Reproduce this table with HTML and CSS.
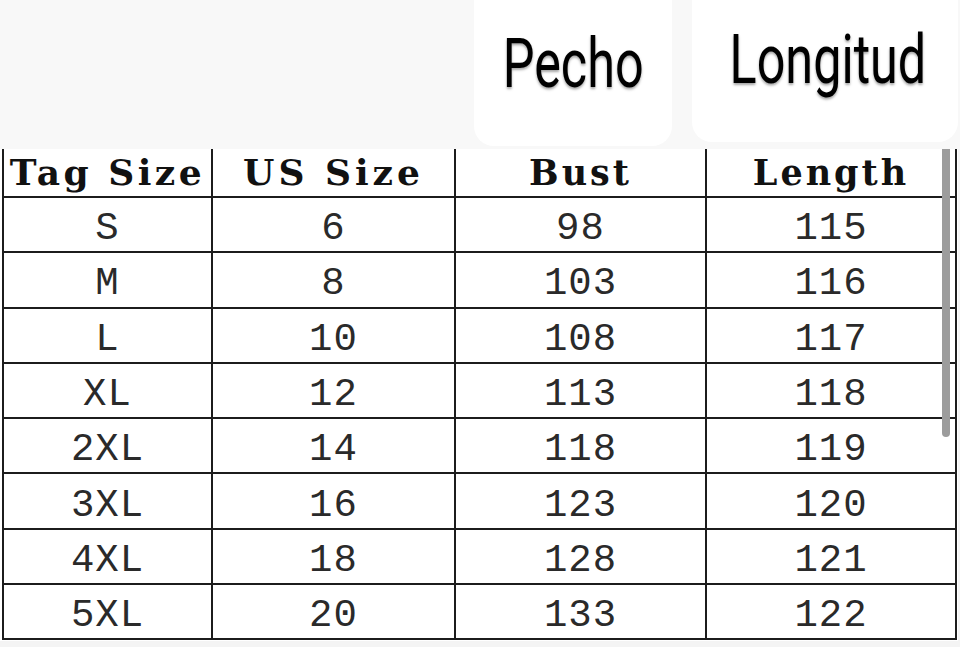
FILE: index.html
```html
<!DOCTYPE html>
<html lang="es">
<head>
<meta charset="utf-8">
<title>Size chart</title>
<link rel="stylesheet" href="styles.css">
</head>
<body>
<div class="topbar">
  <div class="tab tab-pecho"><span class="tab-label">Pecho</span></div>
  <div class="tab tab-longitud"><span class="tab-label">Longitud</span></div>
</div>
<div class="chart">
  <table class="sizes">
    <colgroup>
      <col class="c1"><col class="c2"><col class="c3"><col class="c4">
    </colgroup>
    <thead>
      <tr><th class="h-tag">Tag Size</th><th class="h-us">US Size</th><th>Bust</th><th>Length</th></tr>
    </thead>
    <tbody>
      <tr><td>S</td><td>6</td><td>98</td><td>115</td></tr>
      <tr><td>M</td><td>8</td><td>103</td><td>116</td></tr>
      <tr><td>L</td><td>10</td><td>108</td><td>117</td></tr>
      <tr><td>XL</td><td>12</td><td>113</td><td>118</td></tr>
      <tr><td>2XL</td><td>14</td><td>118</td><td>119</td></tr>
      <tr><td>3XL</td><td>16</td><td>123</td><td>120</td></tr>
      <tr><td>4XL</td><td>18</td><td>128</td><td>121</td></tr>
      <tr><td>5XL</td><td>20</td><td>133</td><td>122</td></tr>
    </tbody>
  </table>
  <div class="scrollbar"></div>
</div>
</body>
</html>
```

FILE: styles.css
```css
html, body {
  margin: 0;
  padding: 0;
}
body {
  background: #f4f4f4;
  width: 960px;
  height: 647px;
  overflow: hidden;
}
.topbar {
  height: 149px;
  display: flex;
  justify-content: flex-end;
  align-items: flex-start;
  gap: 20px;
  padding-right: 2px;
  box-sizing: border-box;
  background: #f8f8f8;
}
.tab {
  background: #ffffff;
  border-radius: 0 0 20px 20px;
  display: flex;
  justify-content: center;
  box-sizing: border-box;
}
.tab-pecho {
  width: 198px;
  height: 146px;
  padding-top: 26px;
}
.tab-longitud {
  width: 266px;
  height: 142px;
  padding-top: 22px;
  padding-left: 6px;
}
.tab-label {
  display: inline-block;
  font-family: "Roboto", "Noto Sans", sans-serif;
  font-size: 68px;
  line-height: 76px;
  color: #000;
  transform: scaleX(0.74);
  text-shadow: 0 2px 3px rgba(0, 0, 0, 0.35);
}
.chart {
  position: relative;
  background: #ffffff;
  width: 958px;
  height: 492px;
}
.sizes {
  border-collapse: collapse;
  margin-left: 2px;
  table-layout: fixed;
  width: 953px;
  font-family: "Liberation Mono", "DejaVu Sans Mono", monospace;
  color: #2a2a2a;
}
.c1 { width: 209px; }
.c2 { width: 243px; }
.c3 { width: 251px; }
.c4 { width: 250px; }
.sizes th, .sizes td {
  border: 2px solid #1c1c1c;
  text-align: center;
  padding: 0;
  white-space: nowrap;
}
.sizes thead th {
  border-top: none;
  height: 47px;
  font-family: "DejaVu Serif", "Liberation Serif", serif;
  font-size: 35px;
  font-weight: bold;
  letter-spacing: 3px;
  line-height: 47px;
  color: #111;
}
.sizes thead th.h-tag {
  font-size: 36px;
  letter-spacing: 3.5px;
}
.sizes thead th.h-us {
  font-size: 36px;
  letter-spacing: 4px;
}
.sizes td {
  height: 44.3px;
  font-size: 39px;
  line-height: 44px;
  letter-spacing: 1px;
  padding-top: 9px;
}
.scrollbar {
  position: absolute;
  left: 942px;
  top: 0;
  width: 8px;
  height: 288px;
  background: #9c9c9c;
  border-radius: 0 0 4px 4px;
}
```
